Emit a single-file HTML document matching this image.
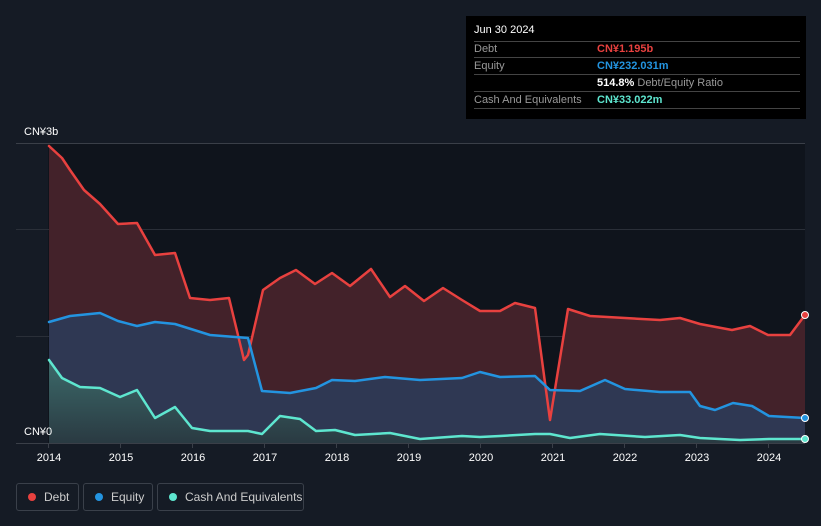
<!DOCTYPE html>
<html><head><meta charset="utf-8"><style>
*{margin:0;padding:0;box-sizing:border-box}
body{width:821px;height:526px;background:#151b25;font-family:"Liberation Sans",sans-serif;position:relative;overflow:hidden;color:#fff}
.tt{position:absolute;left:466px;top:16px;width:340px;height:103px;background:#000;font-size:11px}
.tt .r{position:absolute;left:8px;width:326px;border-bottom:1px solid #444;height:17px}
.tt span{position:absolute;top:2px}
.lg{position:absolute;top:483px;height:28px;border:1px solid #3a404a;border-radius:3px;font-size:12px;color:#ccc;line-height:26px;padding-left:27px}
.lg i{position:absolute;left:11px;top:9px;width:8px;height:8px;border-radius:50%}
.ax{position:absolute;font-size:11px;color:#fff}
</style></head><body>
<svg width="821" height="526" style="position:absolute;left:0;top:0">
<defs>
<linearGradient id="cg" x1="0" y1="0" x2="0" y2="1"><stop offset="0" stop-color="#3c6a6a"/><stop offset="1" stop-color="#2a3a42"/></linearGradient>
</defs>
<rect x="48" y="143" width="757" height="300" fill="#0f141c"/>
<line x1="16" y1="143.5" x2="805" y2="143.5" stroke="#3a3f48"/>
<line x1="16" y1="229.5" x2="805" y2="229.5" stroke="#2a2f38"/>
<line x1="16" y1="336.5" x2="805" y2="336.5" stroke="#2a2f38"/>
<line x1="16" y1="443.5" x2="805" y2="443.5" stroke="#3a3f48"/>
<polygon fill="#43222a" points="49,443 49,146 62,158 70,170 84,190 100,204 118,224 137,223 155,255 175,253 190,298 210,300 229,298 244,360 248,355 263,290 280,278 296,270 315,284 332,273 350,286 371,269 390,297 405,286 424,301 443,288 462,300 480,311 500,311 515,303 535,308 550,420 568,309 590,316 625,318 660,320 680,318 700,324 732,330 750,326 768,335 790,335 805,315 805,443"/>
<polygon fill="#2f3853" points="49,443 49,322 70,316 100,313 118,321 137,326 155,322 175,324 210,335 248,338 262,391 290,393 316,388 332,380 355,381 385,377 420,380 462,378 480,372 500,377 535,376 550,390 580,391 605,380 625,389 660,392 690,392 700,406 715,410 733,403 752,406 769,416 805,418 805,443"/>
<polygon fill="url(#cg)" points="49,443 49,360 62,378 80,387 100,388 120,397 137,390 155,418 175,407 192,428 210,431 248,431 262,434 280,416 300,419 316,431 335,430 355,435 390,433 420,439 462,436 480,437 500,436 535,434 550,434 570,438 600,434 645,437 680,435 700,438 740,440 769,439 805,439 805,443"/>
<g fill="none" stroke-width="2.5" stroke-linejoin="round" stroke-linecap="round">
<polyline stroke="#e8413f" points="49,146 62,158 70,170 84,190 100,204 118,224 137,223 155,255 175,253 190,298 210,300 229,298 244,360 248,355 263,290 280,278 296,270 315,284 332,273 350,286 371,269 390,297 405,286 424,301 443,288 462,300 480,311 500,311 515,303 535,308 550,420 568,309 590,316 625,318 660,320 680,318 700,324 732,330 750,326 768,335 790,335 805,315"/>
<polyline stroke="#2394e0" points="49,322 70,316 100,313 118,321 137,326 155,322 175,324 210,335 248,338 262,391 290,393 316,388 332,380 355,381 385,377 420,380 462,378 480,372 500,377 535,376 550,390 580,391 605,380 625,389 660,392 690,392 700,406 715,410 733,403 752,406 769,416 805,418"/>
<polyline stroke="#5ee6cf" points="49,360 62,378 80,387 100,388 120,397 137,390 155,418 175,407 192,428 210,431 248,431 262,434 280,416 300,419 316,431 335,430 355,435 390,433 420,439 462,436 480,437 500,436 535,434 550,434 570,438 600,434 645,437 680,435 700,438 740,440 769,439 805,439"/>
</g>
<circle cx="805" cy="315" r="3.5" fill="#e8413f" stroke="#fff" stroke-width="1"/>
<circle cx="805" cy="418" r="3.5" fill="#2394e0" stroke="#fff" stroke-width="1"/>
<circle cx="805" cy="439" r="3.5" fill="#5ee6cf" stroke="#fff" stroke-width="1"/>
<g stroke="#3a3f48"><line x1="48.5" y1="443" x2="48.5" y2="448"/><line x1="120.5" y1="443" x2="120.5" y2="448"/><line x1="192.5" y1="443" x2="192.5" y2="448"/><line x1="264.5" y1="443" x2="264.5" y2="448"/><line x1="336.5" y1="443" x2="336.5" y2="448"/><line x1="408.5" y1="443" x2="408.5" y2="448"/><line x1="480.5" y1="443" x2="480.5" y2="448"/><line x1="552.5" y1="443" x2="552.5" y2="448"/><line x1="624.5" y1="443" x2="624.5" y2="448"/><line x1="696.5" y1="443" x2="696.5" y2="448"/><line x1="768.5" y1="443" x2="768.5" y2="448"/></g>
<g fill="#fff" font-size="11" text-anchor="middle" font-family="Liberation Sans">
<text x="49" y="461">2014</text><text x="121" y="461">2015</text><text x="193" y="461">2016</text><text x="265" y="461">2017</text><text x="337" y="461">2018</text><text x="409" y="461">2019</text><text x="481" y="461">2020</text><text x="553" y="461">2021</text><text x="625" y="461">2022</text><text x="697" y="461">2023</text><text x="769" y="461">2024</text>
</g>
<text x="24" y="135" fill="#fff" font-size="11">CN¥3b</text>
<text x="24" y="435" fill="#fff" font-size="11">CN¥0</text>
</svg>
<div class="tt">
<div style="position:absolute;left:8px;top:8px;font-size:11px;color:#fff">Jun 30 2024</div>
<div class="r" style="top:25px;border-top:1px solid #444;height:17px"></div>
<div class="r" style="top:25px;border:none"><span style="color:#999">Debt</span><span style="left:123px;color:#e8413f;font-weight:bold">CN¥1.195b</span></div>
<div class="r" style="top:42px"><span style="color:#999">Equity</span><span style="left:123px;color:#2394e0;font-weight:bold">CN¥232.031m</span><span style="left:123px;top:19px;color:#999;white-space:nowrap"><b style="color:#fff">514.8%</b> Debt/Equity Ratio</span></div>
<div class="r" style="top:59px;height:17px;border:none;border-bottom:1px solid #444"></div>
<div class="r" style="top:76px"><span style="color:#999">Cash And Equivalents</span><span style="left:123px;color:#5ee6cf;font-weight:bold">CN¥33.022m</span></div>
</div>
<div class="lg" style="left:16px;width:63px"><i style="background:#e8413f"></i>Debt</div>
<div class="lg" style="left:83px;width:70px"><i style="background:#2394e0"></i>Equity</div>
<div class="lg" style="left:157px;width:147px"><i style="background:#5ee6cf"></i>Cash And Equivalents</div>
</body></html>
